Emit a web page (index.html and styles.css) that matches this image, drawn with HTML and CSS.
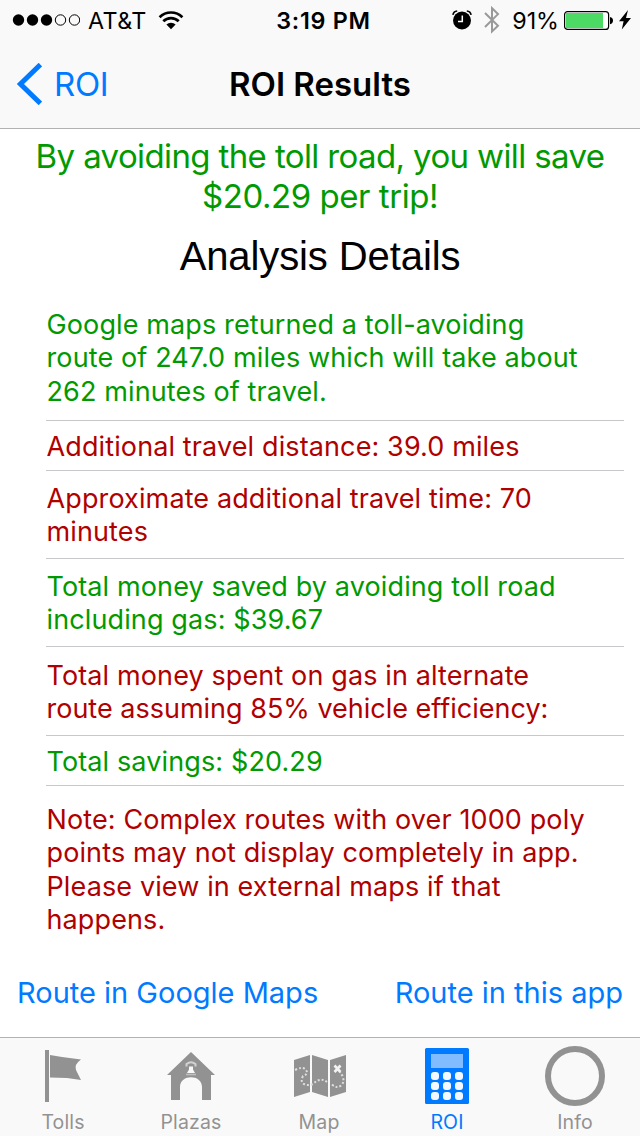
FILE: index.html
```
<!DOCTYPE html>
<html lang="en">
<head>
    <meta charset="UTF-8">
    <meta name="viewport" content="width=device-width, initial-scale=1.0">
    <title>ROI Results</title>
    <link rel="stylesheet" href="styles.css">
</head>
<body>
    <header class="top-bar">
        <div class="status-bar">
            <div class="status-left">
                <svg class="signal" width="68" height="12" viewBox="0 0 68 12">
                    <circle cx="6.5" cy="6" r="5.7"/>
                    <circle cx="20.5" cy="6" r="5.7"/>
                    <circle cx="34.5" cy="6" r="5.7"/>
                    <circle class="empty" cx="48.5" cy="6" r="5.2"/>
                    <circle class="empty" cx="62.5" cy="6" r="5.2"/>
                </svg>
                <span class="carrier">AT&amp;T</span>
                <svg class="wifi" width="26" height="19" viewBox="0 0 26 19">
                    <path d="M1.6 6.2a16.2 16.2 0 0 1 22.8 0M5.3 10.3a11 11 0 0 1 15.4 0" fill="none" stroke="#000" stroke-width="2.7"/>
                    <path d="M13 18.3l-4.6-4.7a6.6 6.6 0 0 1 9.2 0z"/>
                </svg>
            </div>
            <span class="clock">3:19 PM</span>
            <div class="status-right">
                <svg class="alarm" width="20" height="20" viewBox="0 0 20 20">
                    <circle cx="10" cy="10.5" r="9"/>
                    <path d="M.9 4.8Q1.5 1.4 5.2 1M19.1 4.8Q18.5 1.4 14.8 1" fill="none" stroke="#000" stroke-width="1.6"/>
                    <path d="M10.3 5.5v6H6" fill="none" stroke="#fff" stroke-width="1.5"/>
                </svg>
                <svg class="bluetooth" width="16" height="28" viewBox="0 0 16 28">
                    <path d="M1 7l13 12.8-6 5.7V2.2l6 5.9L1 21" fill="none" stroke="#999" stroke-width="2"/>
                </svg>
                <span class="percent">91%</span>
                <svg class="battery" width="50" height="20" viewBox="0 0 50 20">
                    <rect x=".6" y="1.6" width="44" height="17.8" rx="3" fill="#fff" stroke="#000" stroke-width="1.2"/>
                    <rect x="2" y="3" width="37" height="15" fill="#4cd964"/>
                    <path d="M46 7q3 .6 3 3.6t-3 3.6z"/>
                </svg>
                <svg class="bolt" width="12" height="20" viewBox="0 0 12 20">
                    <path d="M9 0L0 11.2h4.6L2.8 19.5 12 8H7z"/>
                </svg>
            </div>
        </div>
        <nav class="nav-bar">
            <a href="#" class="back">
                <svg width="26" height="42" viewBox="0 0 26 42">
                    <path d="M24.4 1.6L4.4 21l20 19.4" fill="none" stroke="#007aff" stroke-width="5"/>
                </svg>
                <span>ROI</span>
            </a>
            <h1>ROI Results</h1>
        </nav>
    </header>

    <main class="content">
        <p class="summary">By avoiding the toll road, you will save<br><span class="amount">$20.29 per trip!</span></p>
        <h2>Analysis Details</h2>

        <ul class="details">
            <li class="good lines-3">Google maps returned a toll-avoiding<br>route of 247.0 miles which will take about<br>262 minutes of travel.</li>
            <li class="bad">Additional travel distance: 39.0 miles</li>
            <li class="bad lines-2">Approximate additional travel time: 70<br>minutes</li>
            <li class="good lines-2">Total money saved by avoiding toll road<br>including gas: $39.67</li>
            <li class="bad lines-2 tall">Total money spent on gas in alternate<br><span class="tight">route assuming 85% vehicle efficiency:</span></li>
            <li class="good">Total savings: $20.29</li>
            <li class="bad lines-4">Note: Complex routes with over 1000 poly<br>points may not display completely in app.<br>Please view in external maps if that<br>happens.</li>
        </ul>

        <div class="actions">
            <a href="#">Route in Google Maps</a>
            <a href="#">Route in this app</a>
        </div>
    </main>

    <footer class="tab-bar">
        <a href="#" class="tab">
            <svg width="60" height="60" viewBox="0 0 60 60">
                <path d="M12 4h4v52h-4z"/>
                <path d="M17 9l12 2 19 2.5q-7 5-5 10.500L48 34l-14-2-17-.5z"/>
            </svg>
            <span>Tolls</span>
        </a>
        <a href="#" class="tab">
            <svg width="60" height="60" viewBox="0 0 60 60">
                <path d="M30 6L54 29h-4v25H41V41c0-13-22-13-22 0v13H10V29H6z"/>
                <path d="M25.5 20.5V18q4.5-3.5 9 0v2.5" fill="none" stroke="#d2d2d2" stroke-width="2"/>
                <path d="M28 20.5h4v3l2 3.5h-8l2-3.5z" fill="#f9f9f9"/>
                <path d="M25 28.5h10" stroke="#c0c0c0" stroke-width="1.5"/>
            </svg>
            <span>Plazas</span>
        </a>
        <a href="#" class="tab">
            <svg width="60" height="60" viewBox="0 0 60 60">
                <path d="M5 14l16-5v37L5 51zM23 9l16 5v37l-16-5zM41 14l16-5v37l-16 5z"/>
                <path class="trail" d="M6 24Q14 20 17 24T14 30Q11 36 15 38T24 38Q32 30 39 37M43 38.5Q48 43 52 39.5T53.5 30L51 26"/>
                <path d="M45.5 19.5l6 6.5M51.5 19.5l-6 6.5" fill="none" stroke="#f4f4f4" stroke-width="2.6"/>
            </svg>
            <span>Map</span>
        </a>
        <a href="#" class="tab active">
            <svg width="60" height="60" viewBox="0 0 60 60">
                <rect x="8" y="2" width="44" height="56" rx="1.5"/>
                <path d="M14 8h32v14H14z" fill="#80bcff"/>
                <g fill="#f4f8ff">
                    <rect x="14" y="26" width="8" height="8" rx="3"/>
                    <rect x="26" y="26" width="8" height="8" rx="3"/>
                    <rect x="38" y="26" width="8" height="8" rx="3"/>
                    <rect x="14" y="36" width="8" height="8" rx="3"/>
                    <rect x="26" y="36" width="8" height="8" rx="3"/>
                    <rect x="38" y="36" width="8" height="8" rx="3"/>
                    <rect x="14" y="46" width="8" height="8" rx="3"/>
                    <rect x="26" y="46" width="8" height="8" rx="3"/>
                    <rect x="38" y="46" width="8" height="8" rx="3"/>
                </g>
            </svg>
            <span>ROI</span>
        </a>
        <a href="#" class="tab">
            <svg width="60" height="60" viewBox="0 0 60 60">
                <circle cx="30" cy="30" r="27" fill="none" stroke="#929292" stroke-width="6"/>
            </svg>
            <span>Info</span>
        </a>
    </footer>
</body>
</html>
```
FILE: styles.css
```
* {
    margin: 0;
    padding: 0;
    box-sizing: border-box;
}
body {
    width: 640px;
    height: 1136px;
    display: flex;
    flex-direction: column;
    overflow: hidden;
    background-color: #fff;
    color: #000;
    font-family: Inter, "Liberation Sans", sans-serif;
}
a {
    color: #007aff;
    text-decoration: none;
}
svg {
    display: block;
    flex-shrink: 0;
}

/* Status bar and navigation */
.top-bar {
    height: 129px;
    background-color: #f9f9f9;
    border-bottom: 1px solid #b2b2b2;
}
.status-bar {
    height: 40px;
    display: grid;
    grid-template-columns: 1fr auto 1fr;
    align-items: center;
    padding: 0 9px 0 12px;
    font-size: 23.3px;
}
.status-left,
.status-right {
    display: flex;
    align-items: center;
}
.status-right {
    justify-content: flex-end;
}
.signal .empty {
    fill: none;
    stroke: #000;
    stroke-width: 1;
}
.carrier {
    margin-left: 8px;
    letter-spacing: 0.4px;
}
.wifi {
    margin-left: 11px;
}
.clock {
    margin-left: 4px;
    font-weight: 600;
    letter-spacing: 0.7px;
}
.alarm {
    margin-right: 1px;
}
.bluetooth {
    margin-left: 11px;
}
.percent {
    margin-left: 12px;
}
.battery {
    margin-left: 5px;
}
.bolt {
    margin-left: 5px;
}
.nav-bar {
    height: 88px;
    display: grid;
    grid-template-columns: 1fr auto 1fr;
    align-items: center;
    padding: 0 16px;
}
.nav-bar h1 {
    font-size: 33px;
    font-weight: 600;
}
.back {
    display: flex;
    align-items: center;
    gap: 12px;
    font-size: 33px;
    letter-spacing: -0.3px;
}

/* Results */
.content {
    flex: 1;
    padding-top: 7px;
}
.summary {
    color: #009a00;
    font-size: 33px;
    letter-spacing: -0.62px;
    line-height: 40px;
    text-align: center;
    white-space: nowrap;
}
.summary .amount {
    letter-spacing: -0.45px;
}
.content h2 {
    margin-top: 16px;
    font-family: "Liberation Sans", Arial, sans-serif;
    font-size: 40px;
    font-weight: 400;
    letter-spacing: -0.1px;
    line-height: 48px;
    text-align: center;
}
.details {
    margin: 16px 16px 0 46px;
    list-style: none;
}
.details li {
    height: 50px;
    display: flow-root;
    padding-top: 9px;
    padding-left: 0.5px;
    border-bottom: 1px solid #c8c7cc;
    font-size: 27px;
    letter-spacing: 0.12px;
    line-height: 33.3px;
    white-space: nowrap;
}
.details .good {
    color: #009a00;
}
.details .bad {
    color: #b00000;
}
.details .lines-2 {
    height: 88px;
    padding-top: 11px;
}
.details .tall {
    height: 89px;
    padding-top: 11.5px;
}
.details .tight {
    letter-spacing: 0;
}
.details .lines-3 {
    height: 125px;
    padding-top: 12px;
}
.details .lines-4 {
    height: 167px;
    padding-top: 17px;
    border-bottom: none;
}
.actions {
    display: flex;
    justify-content: space-between;
    margin-top: 20px;
    padding: 0 17px;
    font-size: 29px;
    line-height: 40px;
}

/* Tabs */
.tab-bar {
    height: 99px;
    display: grid;
    grid-template-columns: repeat(5, 128px);
    border-top: 1px solid #b2b2b2;
    background-color: #f9f9f9;
}
.tab {
    display: flex;
    flex-direction: column;
    align-items: center;
    padding-top: 8px;
    padding-right: 2px;
    color: #929292;
    fill: #929292;
    font-size: 19.5px;
    letter-spacing: 0.15px;
    line-height: 24px;
}
.tab span {
    margin-top: 4px;
}
.tab.active {
    color: #007aff;
    fill: #007aff;
}
.trail {
    fill: none;
    stroke: #dedede;
    stroke-width: 2;
    stroke-dasharray: 2 2;
}
```
